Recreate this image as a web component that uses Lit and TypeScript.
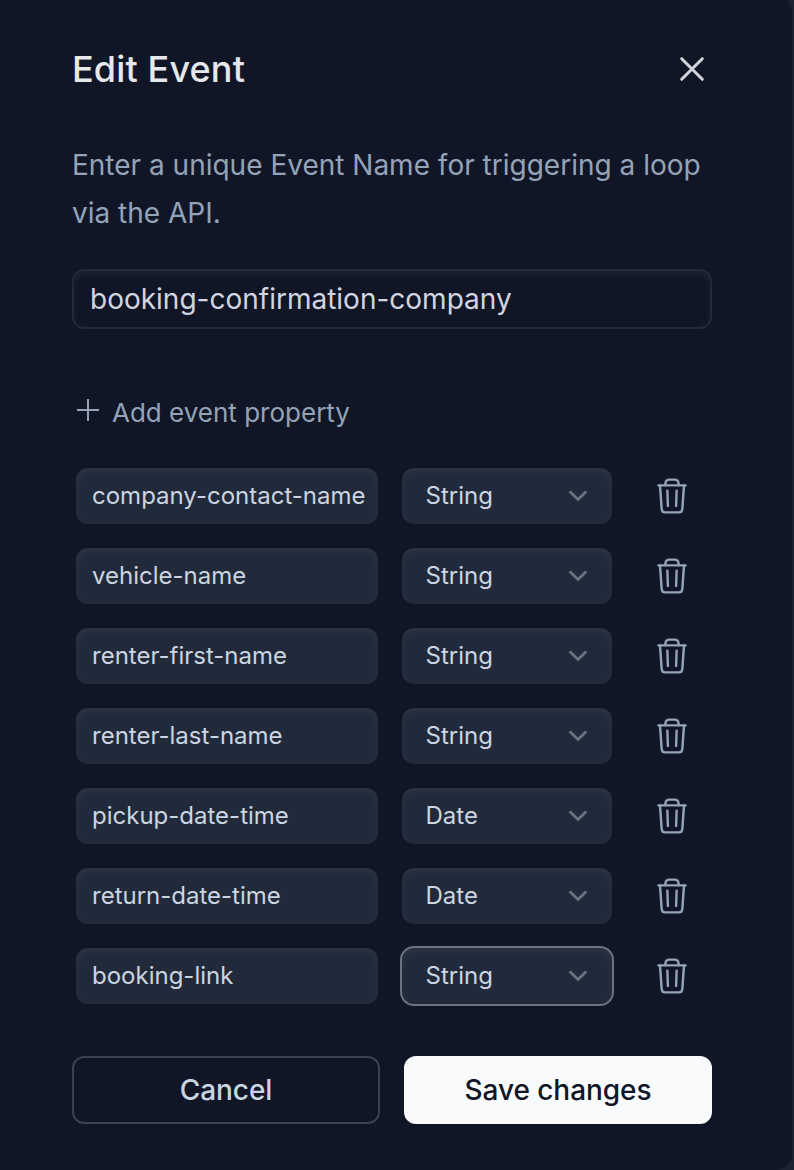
import { LitElement, html, css } from "lit";
import { customElement, property, state } from "lit/decorators.js";
import { classMap } from "lit/directives/class-map.js";

type Prop = { name: string; type: string; focused?: boolean };

@customElement("property-row")
class PropertyRow extends LitElement {
  @property({ attribute: false }) item!: Prop;

  static styles = css`
    :host { display: grid; grid-template-columns: 302px 210px 54px; align-items: center; column-gap: 24px; height: 56px; }
    .field {
      box-sizing: border-box; height: 56px; border-radius: 12px; background: #212a3a;
      box-shadow: inset 0 4px 8px rgba(255, 255, 255, 0.05);
      color: #cbd5e1; font-size: 24px; line-height: 56px; white-space: nowrap;
    }
    .name { padding-left: 16px; }
    .type { display: flex; align-items: center; justify-content: space-between; padding: 0 24px 0 23.5px; }
    .focused { outline: 2px solid #6b7280; }
    .chevron { width: 20px; height: 20px; display: block; }
    .trash { width: 36px; height: 40px; display: block; margin-left: 18px; }
  `;

  render() {
    return html`
      <div class="field name">${this.item.name}</div>
      <div class=${classMap({ field: true, type: true, focused: !!this.item.focused })}>
        <span>${this.item.type}</span>
        <svg class="chevron" viewBox="0 0 20 20" fill="none" stroke="#6b7280" stroke-width="2.8" stroke-linecap="round" stroke-linejoin="round">
          <path d="M2.5 6.3L10 13.6L17.5 6.3" />
        </svg>
      </div>
      <svg class="trash" viewBox="0 0 36 40" fill="none" stroke="#94a3b8" stroke-width="2.4" stroke-linecap="round" stroke-linejoin="round">
        <path d="M4.4 9.4H31.6" />
        <path d="M11.4 9V7.6Q11.6 3.7 15.4 3.6H20.6Q24.4 3.7 24.6 7.6V9" />
        <path d="M6 9.6L7.7 33Q7.9 36.4 11 36.4H25Q28.1 36.4 28.3 33L30 9.6" />
        <path d="M13.4 14.8L13.9 30M22.6 14.8L22.1 30" />
      </svg>
    `;
  }
}

@customElement("app-root")
class AppRoot extends LitElement {
  @state() private items: Prop[] = [
    { name: "company-contact-name", type: "String" },
    { name: "vehicle-name", type: "String" },
    { name: "renter-first-name", type: "String" },
    { name: "renter-last-name", type: "String" },
    { name: "pickup-date-time", type: "Date" },
    { name: "return-date-time", type: "Date" },
    { name: "booking-link", type: "String", focused: true },
  ];

  static styles = css`
    :host {
      display: block; width: 794px; height: 1170px; overflow: hidden; background: #1b2332;
      font-family: Inter, sans-serif;
    }
    .panel {
      box-sizing: border-box; width: 792px; height: 1174px; margin-top: -4px; padding: 52px 80px 0 72px;
      background: #111627; border-radius: 0 16px 16px 0;
    }
    .header { display: flex; align-items: center; justify-content: space-between; height: 42px; }
    .title { margin: 0; font-size: 36px; line-height: 42px; font-weight: 500; letter-spacing: 0.14px; color: #e5e7eb; }
    .close { width: 40px; height: 40px; }
    .description { margin: 51px 0 0; font-size: 28px; line-height: 48px; color: #94a3b8; white-space: nowrap; }
    .event-name {
      box-sizing: border-box; height: 60px; margin-top: 32px; padding-left: 16px;
      border: 2px solid #212a3a; border-radius: 12px;
      box-shadow: inset 0 4px 8px rgba(255, 255, 255, 0.05);
      font-size: 28px; line-height: 57px; color: #d1d5e0;
    }
    .add { display: flex; align-items: center; height: 40px; margin-top: 64px; font-size: 26px; line-height: 38px; color: #94a3b8; }
    .plus { width: 32px; height: 40px; margin-right: 8px; }
    .rows { display: grid; row-gap: 24px; margin: 35px 0 0 4px; }
    .actions { display: grid; grid-template-columns: 1fr 1fr; column-gap: 24px; margin-top: 52px; }
    .button {
      box-sizing: border-box; height: 68px; border-radius: 12px; border: 2px solid #374151; padding: 0;
      background: transparent; color: #cbd5e1; font: 500 28px/64px Inter, sans-serif; letter-spacing: -0.07px;
    }
    .primary { background: #f9fafb; border-color: #f9fafb; color: #111627; }
  `;

  render() {
    return html`
      <div class="panel">
        <div class="header">
          <h1 class="title">Edit Event</h1>
          <svg class="close" viewBox="0 0 40 40" fill="none" stroke="#d1d5db" stroke-width="3" stroke-linecap="round">
            <path d="M9.7 9.7L30.3 30.3M30.3 9.7L9.7 30.3" />
          </svg>
        </div>
        <p class="description">Enter a unique Event Name for triggering a loop<br />via the API.</p>
        <div class="event-name">booking-confirmation-company</div>
        <div class="add">
          <svg class="plus" viewBox="0 0 32 40" fill="none" stroke="#94a3b8" stroke-width="2">
            <path d="M5 17H27M16 6V28" />
          </svg>
          <span>Add event property</span>
        </div>
        <div class="rows">${this.items.map((item) => html`<property-row .item=${item}></property-row>`)}</div>
        <div class="actions">
          <button class="button">Cancel</button>
          <button class="button primary">Save changes</button>
        </div>
      </div>
    `;
  }
}
